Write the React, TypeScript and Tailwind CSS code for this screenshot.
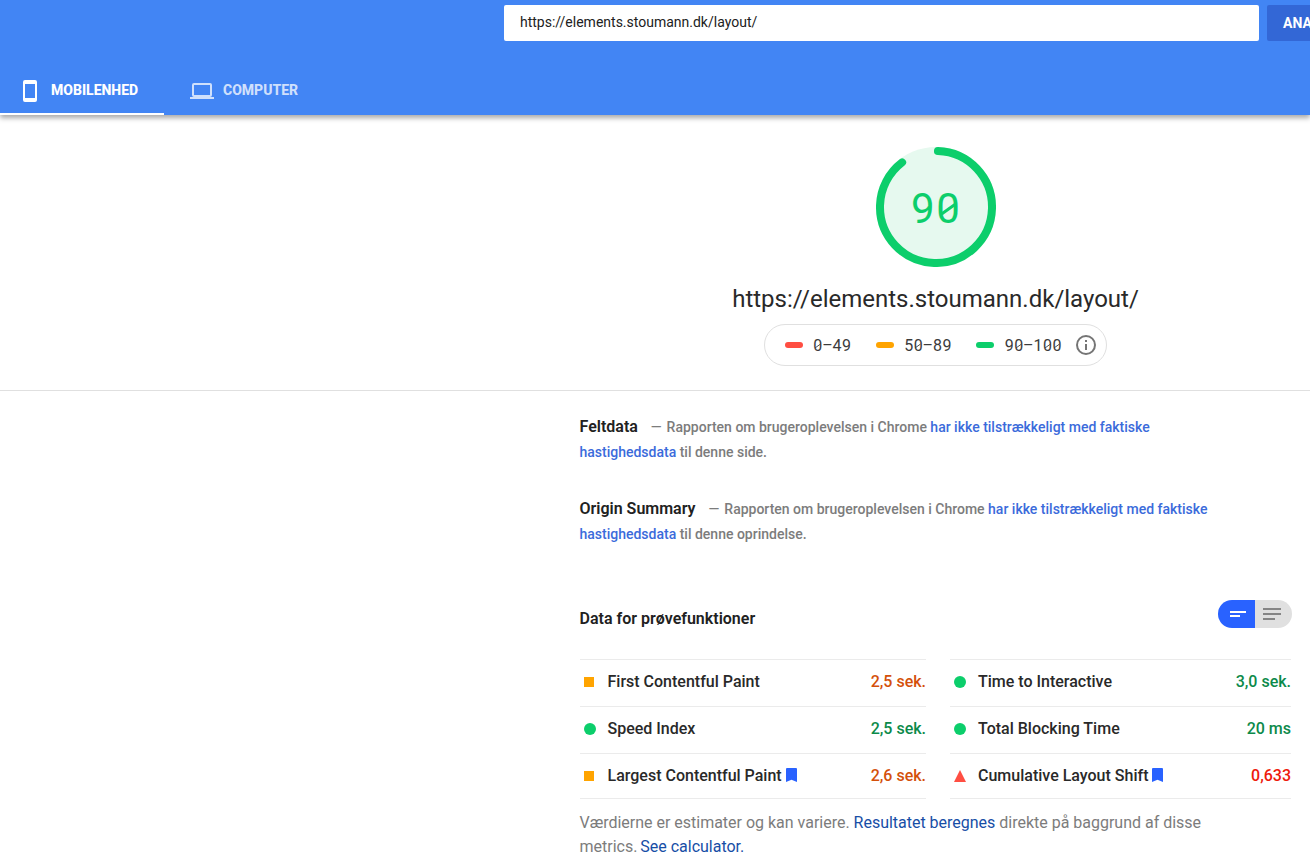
import React from "react";

type Status = "pass" | "average" | "fail";

interface Metric {
  name: string;
  value: string;
  status: Status;
  vital?: boolean;
}

const leftMetrics: Metric[] = [
  { name: "First Contentful Paint", value: "2,5 sek.", status: "average" },
  { name: "Speed Index", value: "2,5 sek.", status: "pass" },
  { name: "Largest Contentful Paint", value: "2,6 sek.", status: "average", vital: true },
];

const rightMetrics: Metric[] = [
  { name: "Time to Interactive", value: "3,0 sek.", status: "pass" },
  { name: "Total Blocking Time", value: "20 ms", status: "pass" },
  { name: "Cumulative Layout Shift", value: "0,633", status: "fail", vital: true },
];

const valueColor: Record<Status, string> = {
  pass: "text-[#0c8a4a]",
  average: "text-[#d4500a]",
  fail: "text-[#ee1a0c]",
};

function StatusShape({ status }: { status: Status }) {
  if (status === "pass") return <span className="size-3 rounded-full bg-[#0cce6b]" />;
  if (status === "average") return <span className="size-2.5 bg-[#ffa400]" />;
  return (
    <svg className="size-3" viewBox="0 0 12 12" fill="#ff4e42">
      <path d="M6 0 12 12H0Z" />
    </svg>
  );
}

/* Fixed-pitch digits; every zero carries a diagonal stroke. */
function MonoText({ text, large }: { text: string; large?: boolean }) {
  return (
    <span className="flex">
      {text.split("").map((c, i) => (
        <span key={i} className="relative inline-flex w-[0.6em] justify-center">
          {c}
          {c === "0" && (
            <svg
              className="absolute inset-x-0 top-0 h-full w-full overflow-visible"
              viewBox="0 0 24 40"
              fill="none"
              stroke="currentColor"
              strokeWidth={large ? 3 : 2.2}
            >
              <path d="M5 25 19 15" />
            </svg>
          )}
        </span>
      ))}
    </span>
  );
}

function MetricColumn({ metrics, className }: { metrics: Metric[]; className: string }) {
  return (
    <div className={className}>
      {metrics.map((m, i) => (
        <div
          key={m.name}
          className={`flex border-t border-[#ebebeb] pt-[10px] font-medium ${i === 2 ? "h-[46px] border-b" : "h-[47px]"}`}
        >
          <span className="flex h-6 w-7 shrink-0 items-center pl-1">
            <StatusShape status={m.status} />
          </span>
          <span className="flex h-6 flex-1 items-center whitespace-nowrap text-[#292929]">
            {m.name}
            {m.vital && (
              <svg className="mb-[2px] ml-[4px] h-[14px] w-[11px]" viewBox="0 0 11 14" fill="#2962ff">
                <path d="M0 1Q0 0 1 0H10Q11 0 11 1V14L5.5 11.8 0 14Z" />
              </svg>
            )}
          </span>
          <span className={`h-6 leading-6 ${valueColor[m.status]}`}>{m.value}</span>
        </div>
      ))}
    </div>
  );
}

function LegendItem({ color, label }: { color: string; label: string }) {
  return (
    <span className="flex items-center gap-[10px]">
      <span className={`h-[6px] w-[18px] rounded-full ${color}`} />
      <span className="pt-[2px] text-[#3c3c3c]">
        <MonoText text={label} />
      </span>
    </span>
  );
}

function FieldSection({ title, ending }: { title: string; ending: string }) {
  return (
    <section className="h-[82px] text-sm leading-[25px] font-medium text-[#7c7c7c]">
      <h2 className="mr-[13px] inline text-base leading-[25px] font-semibold text-[#212121]">{title}</h2>
      <span className="mr-[1.5px]">—</span>
      {" Rapporten om brugeroplevelsen i Chrome "}
      <a className="text-[#3b6bdb]">
        har ikke tilstrækkeligt med faktiske
        <br />
        hastighedsdata
      </a>
      {" " + ending}
    </section>
  );
}

export default function App() {
  return (
    <div className="h-[862px] w-[1310px] overflow-hidden bg-white font-['Roboto',sans-serif] text-base text-[#212121]">
      <header className="relative flex h-[115px] flex-col justify-between bg-[#4285f4] pt-[5px] shadow-[0_3px_5px_rgba(0,0,0,0.34)]">
        <div className="flex gap-2 pl-[504px]">
          <div className="h-9 w-[755px] shrink-0 rounded-[2px] bg-white px-4 text-sm leading-[35px]">
            https://elements.stoumann.dk/layout/
          </div>
          <button className="h-9 w-[120px] shrink-0 rounded-[2px] bg-[#3367d6] pl-4 text-left text-sm leading-[35px] font-bold text-white">
            ANALYSER
          </button>
        </div>
        <nav className="flex h-12 text-sm font-bold">
          <div className="flex w-[164px] items-center border-b-2 border-white pl-[23px] text-white">
            <svg className="mt-[2px] h-[22px] w-[14px]" viewBox="0 0 14 22" fill="white" fillRule="evenodd">
              <path d="M2 0H12Q14 0 14 2V20Q14 22 12 22H2Q0 22 0 20V2Q0 0 2 0ZM2 4V18H12V4Z" />
            </svg>
            <span className="ml-[14px] font-extrabold">MOBILENHED</span>
          </div>
          <div className="flex items-center border-b-2 border-transparent pl-[26px] text-white/75">
            <svg className="mt-[2px] h-4 w-6" viewBox="0 0 24 16" fill="currentColor" fillRule="evenodd">
              <path d="M4 0H20Q22 0 22 2V12Q22 14 20 14H24V16H0V14H4Q2 14 2 12V2Q2 0 4 0ZM4 2V12H20V2Z" />
            </svg>
            <span className="ml-[9px] font-extrabold">COMPUTER</span>
          </div>
        </nav>
      </header>

      <section className="flex h-[276px] flex-col items-center border-b border-[#e0e0e0] pt-8 pl-[561px]">
        <div className="grid size-[120px] place-items-center">
          <svg className="col-start-1 row-start-1 size-[120px]" viewBox="0 0 120 120">
            <circle cx="60" cy="60" r="60" fill="#e6f9ef" />
            <circle
              cx="60"
              cy="60"
              r="56"
              fill="none"
              stroke="#0cce6b"
              strokeWidth="8"
              strokeLinecap="round"
              strokeDasharray="313 352"
              transform="rotate(-88 60 60)"
            />
          </svg>
          <div className="col-start-1 row-start-1 pt-1 text-[42px] leading-10 text-[#0cce6b]">
            <MonoText text="90" large />
          </div>
        </div>
        <h1 className="mt-4 text-2xl leading-8 whitespace-nowrap text-[#292929]">https://elements.stoumann.dk/layout/</h1>
        <div className="mt-[9px] flex h-[42px] w-[343px] items-center rounded-full border border-[#e0e0e0] pl-5">
          <div className="flex gap-[24.5px]">
            <LegendItem color="bg-[#ff4e42]" label="0–49" />
            <LegendItem color="bg-[#ffa400]" label="50–89" />
            <LegendItem color="bg-[#0cce6b]" label="90–100" />
          </div>
          <svg className="ml-[14px] size-5" viewBox="0 0 20 20" fill="none" stroke="#757575" strokeWidth="2">
            <circle cx="10" cy="10" r="9" />
            <path d="M10 9V15M10 5V7" />
          </svg>
        </div>
      </section>

      <main className="ml-[579.5px] w-[711.5px] pt-[23px]">
        <FieldSection title="Feltdata" ending="til denne side." />
        <FieldSection title="Origin Summary" ending="til denne oprindelse." />

        <div className="mt-[22px] flex h-[59px] justify-between">
          <h2 className="pt-[7px] leading-6 font-semibold">Data for prøvefunktioner</h2>
          <div className="mr-[-1px] flex h-7 w-[74px] overflow-hidden rounded-full">
            <div className="flex w-[37px] bg-[#2962ff] pt-[11px] pl-3">
              <svg className="h-[6px] w-4" viewBox="0 0 16 6" fill="white">
                <path d="M0 0H16V2H0ZM0 4H10V6H0Z" />
              </svg>
            </div>
            <div className="flex w-[37px] bg-[#e0e0e0] pt-2 pl-2">
              <svg className="h-3 w-[18px]" viewBox="0 0 18 12" fill="#858585">
                <path d="M0 0H18V2H0ZM0 5H18V7H0ZM0 10H12V12H0Z" />
              </svg>
            </div>
          </div>
        </div>

        <div className="flex justify-between">
          <MetricColumn metrics={leftMetrics} className="w-[346.5px]" />
          <MetricColumn metrics={rightMetrics} className="w-[341px]" />
        </div>

        <p className="mt-3 leading-6 tracking-[-0.01px] text-[#7c7c7c]">
          Værdierne er estimater og kan variere. <a className="text-[#174ea6]">Resultatet beregnes</a> direkte på
          baggrund af disse
          <br />
          metrics. <a className="-ml-px text-[#174ea6]">See calculator.</a>
        </p>
      </main>
    </div>
  );
}
